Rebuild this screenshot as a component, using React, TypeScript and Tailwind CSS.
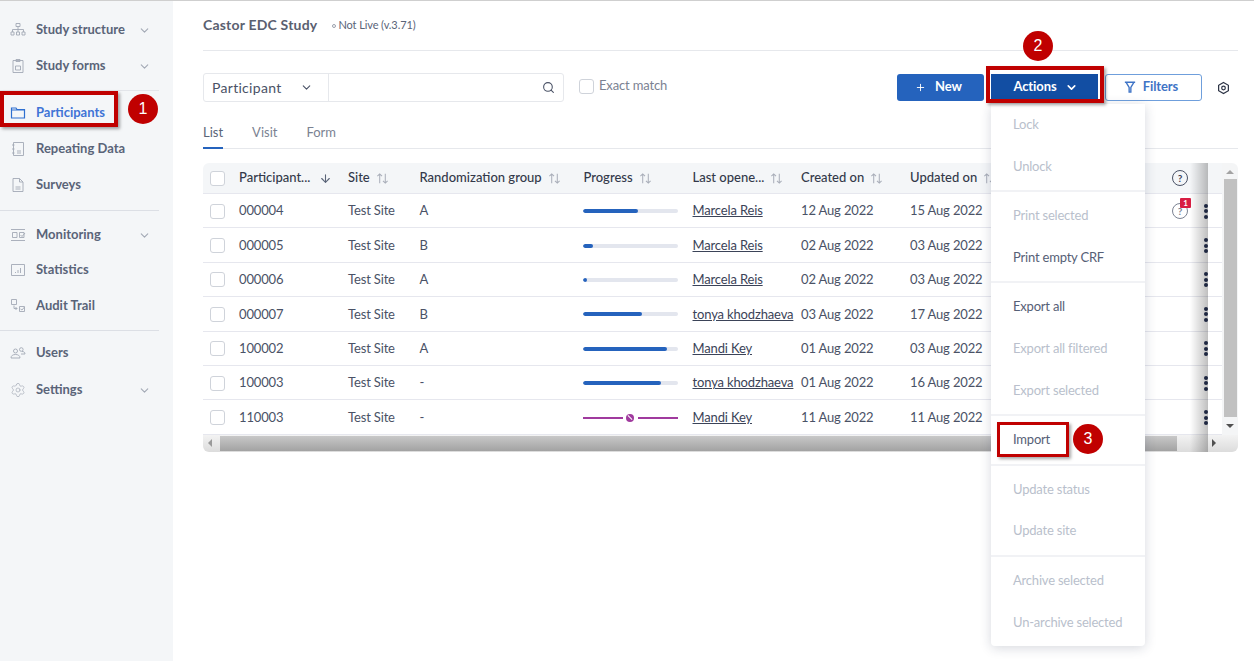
import { ChevronDown, Plus, Search, Settings, ArrowDown } from 'lucide-react';
import type { ReactNode } from 'react';

const PARTICIPANTS = [
  { id: '000004', group: 'A', progress: 58, user: 'Marcela Reis', created: '12 Aug 2022', updated: '15 Aug 2022', query: true },
  { id: '000005', group: 'B', progress: 11, user: 'Marcela Reis', created: '02 Aug 2022', updated: '03 Aug 2022' },
  { id: '000006', group: 'A', progress: 5, user: 'Marcela Reis', created: '02 Aug 2022', updated: '03 Aug 2022' },
  { id: '000007', group: 'B', progress: 63, user: 'tonya khodzhaeva', created: '03 Aug 2022', updated: '17 Aug 2022' },
  { id: '100002', group: 'A', progress: 89, user: 'Mandi Key', created: '01 Aug 2022', updated: '03 Aug 2022' },
  { id: '100003', group: '-', progress: 83, user: 'tonya khodzhaeva', created: '01 Aug 2022', updated: '16 Aug 2022' },
  { id: '110003', group: '-', progress: -1, user: 'Mandi Key', created: '11 Aug 2022', updated: '11 Aug 2022' },
];

const MENU = [
  [{ label: 'Lock' }, { label: 'Unlock' }],
  [{ label: 'Print selected' }, { label: 'Print empty CRF', active: true }],
  [{ label: 'Export all', active: true }, { label: 'Export all filtered' }, { label: 'Export selected' }],
  [{ label: 'Import', active: true }],
  [{ label: 'Update status' }, { label: 'Update site' }],
  [{ label: 'Archive selected' }, { label: 'Un-archive selected' }],
];

const ROW_GRID = 'grid grid-cols-[36px_109px_71.5px_164px_109px_108.5px_109px_1fr_40px]';

function NavIcon({ children }: { children: ReactNode }) {
  return (
    <svg viewBox="0 0 16 16" className="w-4 h-4 shrink-0" fill="none" stroke="currentColor" strokeWidth="0.9">
      {children}
    </svg>
  );
}

const ICONS: Record<string, ReactNode> = {
  structure: <path d="M6 1.500h4v3H6zM8 4.500v3M2.500 10V7.500h11V10M8 7.500V10M1 10h3v3H1zM6.500 10h3v3h-3zM12 10h3v3h-3z" />,
  forms: <path d="M3 2.500h10v12H3zM6 1.500h4v2H6zM5.500 8h5v4h-5z" />,
  folder: <path d="M1.500 3h4.500l1 1.500h7.500v8.500h-13z M1.500 5h13" strokeWidth="1.2" />,
  repeating: <path d="M3.500 1.500h10v13h-10zM2 4h2.500M2 8h2.500M2 12h2.500M7 10h4M7 12h4" />,
  surveys: <path d="M3 1.500h6.500l3.500 3.500v9.500h-10zM9.500 1.500v3.500h3.500M5.500 10h5M5.500 12h5" />,
  monitoring: <path d="M1 2.500h14M1 13.500h14M2.500 5.500h4.500v5h-4.500zM9.500 5.500h4.500v5h-4.500zM10.500 8l1.500 1.500 3-3.500" />,
  statistics: <path d="M1.500 2.500h13v11h-13zM5.500 11v-1M8 11V8M10.500 11V6" />,
  audit: <path d="M1.500 1.500h5v5h-5zM4 7.500v3h3M5.500 9l1.500 1.500-1.500 1.500M9.500 8.500h5v5h-5zM10.500 11l1.500 1 2.500-3" />,
  users: <path d="M1 13c0-2.500 2-3.500 4.500-3.500s4.500 1 4.500 3.500zM3.500 6a2 2 0 1 0 4 0 2 2 0 1 0-4 0zM9.500 4.500a1.800 1.800 0 1 0 3.600 0 1.800 1.800 0 1 0-3.600 0zM11 9h4c0-1.800-1.200-2.500-3-2.500" />,
};

function NavItem({ icon, label, chevron, active, className }: { icon: ReactNode; label: string; chevron?: boolean; active?: boolean; className?: string }) {
  return (
    <div className={`flex items-center pl-[10px] pr-[22px] h-9 ${className ?? ''}`}>
      <span className={active ? 'text-[#2e6fd0]' : 'text-[#a3a9b5]'}>{icon}</span>
      <span className={`ml-[10px] flex-1 text-[13px] font-bold ${active ? 'text-[#3f74d6]' : 'text-[#5a6478]'}`}>{label}</span>
      {chevron && <ChevronDown className="w-[13px] h-[13px] text-[#a3a9b5]" strokeWidth={2} />}
    </div>
  );
}

function Sidebar() {
  return (
    <aside className="w-[173px] shrink-0 bg-[#f4f6f8] pt-[11px]">
      <NavItem icon={<NavIcon>{ICONS.structure}</NavIcon>} label="Study structure" chevron />
      <NavItem icon={<NavIcon>{ICONS.forms}</NavIcon>} label="Study forms" chevron />
      <div className="mt-[6px] mb-[4px] mr-[14px] border-t border-[#e3e5ea]" />
      <NavItem icon={<NavIcon>{ICONS.folder}</NavIcon>} label="Participants" active />
      <NavItem icon={<NavIcon>{ICONS.repeating}</NavIcon>} label="Repeating Data" />
      <NavItem icon={<NavIcon>{ICONS.surveys}</NavIcon>} label="Surveys" />
      <div className="mt-[7px] mb-[6px] mr-[14px] border-t border-[#dcdfe5]" />
      <NavItem icon={<NavIcon>{ICONS.monitoring}</NavIcon>} label="Monitoring" chevron />
      <NavItem icon={<NavIcon>{ICONS.statistics}</NavIcon>} label="Statistics" className="-mt-[1px]" />
      <NavItem icon={<NavIcon>{ICONS.audit}</NavIcon>} label="Audit Trail" />
      <div className="mt-[6px] mb-[4px] mr-[14px] border-t border-[#dcdfe5]" />
      <NavItem icon={<NavIcon>{ICONS.users}</NavIcon>} label="Users" />
      <NavItem icon={<Settings className="w-4 h-4" strokeWidth={1} />} label="Settings" chevron className="mt-[1px]" />
    </aside>
  );
}

function Checkbox({ className }: { className?: string }) {
  return <span className={`block w-[15px] h-[15px] rounded-[3px] border border-[#cfd3da] bg-white ${className ?? ''}`} />;
}

function SortIcon() {
  return (
    <svg viewBox="0 0 14 14" className="w-[13px] h-[13px] ml-[6px] shrink-0 text-[#a9aeb9]" fill="none" stroke="currentColor" strokeWidth="1.1">
      <path d="M4 12V2M1.500 4.500 4 2l2.500 2.500M10 2v10M7.500 9.500 10 12l2.500-2.500" />
    </svg>
  );
}

function HeadCell({ label }: { label: string }) {
  return (
    <div className="flex items-center text-[13px] font-medium text-[#33394a]">
      <span className="whitespace-nowrap">{label}</span>
      <SortIcon />
    </div>
  );
}

function QueryIcon({ color }: { color: string }) {
  return (
    <span className={`flex items-center justify-center w-[16px] h-[16px] rounded-full border-[1.5px] text-[10px] font-bold leading-none ${color}`}>?</span>
  );
}

function Progress({ value }: { value: number }) {
  if (value < 0) {
    return (
      <div className="flex items-center w-[95px] -ml-[1px]">
        <span className="h-[2px] w-[40px] bg-[#a03a9e]" />
        <span className="flex items-center justify-center w-[8px] h-[8px] mx-[3.5px] rounded-full bg-[#a03a9e]">
          <span className="block w-[6px] h-[1px] bg-white rotate-45" />
        </span>
        <span className="h-[2px] flex-1 bg-[#a03a9e]" />
      </div>
    );
  }
  return (
    <div className="w-[95px] h-[4px] -ml-[1px] rounded-full bg-[#e3e6ee] overflow-hidden">
      <div className="h-full rounded-full bg-[#2563bd]" style={{ width: `${value}%` }} />
    </div>
  );
}

function Kebab() {
  return (
    <span className="flex flex-col gap-[1.5px] mt-[1px]">
      <i className="block w-[4px] h-[4px] rounded-full bg-[#1d2640]" />
      <i className="block w-[4px] h-[4px] rounded-full bg-[#1d2640]" />
      <i className="block w-[4px] h-[4px] rounded-full bg-[#1d2640]" />
    </span>
  );
}

function ParticipantsTable() {
  return (
    <div className="relative mt-[14px] rounded-[6px] overflow-hidden">
      <div className="flex">
        <div className="flex-1 min-w-0">
          <div className={`${ROW_GRID} h-[31px] items-center bg-[#f4f6f8] border-b border-[#e6e7ee]`}>
            <div className="pl-[7px]"><Checkbox /></div>
            <div className="flex items-center text-[13px] font-medium text-[#33394a]">
              <span>Participant...</span>
              <ArrowDown className="w-[13px] h-[13px] ml-[9px] text-[#5a6478]" />
            </div>
            <HeadCell label="Site" />
            <HeadCell label="Randomization group" />
            <HeadCell label="Progress" />
            <HeadCell label="Last opene..." />
            <HeadCell label="Created on" />
            <HeadCell label="Updated on" />
            <div />
          </div>
          {PARTICIPANTS.map((p) => (
            <div key={p.id} className={`${ROW_GRID} h-[34.4px] pt-[1px] items-center border-b border-[#e6e7ee] text-[13px] tracking-[-0.15px] text-[#4a5266]`}>
              <div className="pl-[7px]"><Checkbox /></div>
              <div>{p.id}</div>
              <div>Test Site</div>
              <div>{p.group}</div>
              <div><Progress value={p.progress} /></div>
              <div className="underline whitespace-nowrap text-[#3b4358]">{p.user}</div>
              <div>{p.created}</div>
              <div>{p.updated}</div>
              <div />
            </div>
          ))}
        </div>
        {/* Pinned action column */}
        <div className="w-[59px] shrink-0 bg-white">
          <div className="h-[31px] flex items-center pl-[9px] bg-[#f4f6f8] border-b border-[#e6e7ee]">
            <QueryIcon color="border-[#4a5266] text-[#3b4358]" />
          </div>
          {PARTICIPANTS.map((p) => (
            <div key={p.id} className="relative h-[34.4px] flex items-center pl-[9px] border-b border-[#e6e7ee]">
              {p.query && (
                <span className="relative">
                  <QueryIcon color="border-[#7b8292] text-[#7b8292]" />
                  <span className="absolute -top-[5px] left-[8px] w-[11px] h-[10px] rounded-[1px] bg-[#d81e43] text-white text-[8px] font-bold leading-[10px] text-center">1</span>
                </span>
              )}
              <span className="absolute z-[1] left-[41px]"><Kebab /></span>
            </div>
          ))}
        </div>
        {/* Vertical scrollbar */}
        <div className="w-[16px] shrink-0 flex flex-col items-center bg-[#f4f5f6]">
          <span className="mt-[7px] mb-[5px] w-0 h-0 border-x-[4px] border-x-transparent border-b-[4px] border-b-[#a3a3a3]" />
          <div className="w-[13px] flex-1 bg-[#c1c1c1]" />
          <span className="mt-[7px] mb-[7px] w-0 h-0 border-x-[4px] border-x-transparent border-t-[4px] border-t-[#505050]" />
        </div>
      </div>
      {/* Horizontal scrollbar */}
      <div className="h-[17px] flex items-center bg-gradient-to-b from-[#f3f3f3] to-[#dcdcdc]">
        <span className="ml-[5px] w-0 h-0 border-y-[4px] border-y-transparent border-r-[4px] border-r-[#9a9a9a]" />
        <div className="ml-[8px] h-[15px] w-[957px] bg-gradient-to-b from-[#c8c8c8] to-[#a2a2a2]" />
        <span className="ml-auto mr-[22px] w-0 h-0 border-y-[4px] border-y-transparent border-l-[4px] border-l-[#505050]" />
      </div>
      {/* Shadow on the edge of the pinned column */}
      <div className="absolute z-0 left-[987px] top-0 bottom-0 w-[18px] bg-gradient-to-r from-transparent to-black/25" />
    </div>
  );
}

function ActionsMenu() {
  return (
    <div className="absolute left-[991px] top-[103px] z-10 w-[154px] rounded-b-[4px] bg-white shadow-[0_2px_12px_rgba(30,40,70,0.18)] divide-y-2 divide-[#f1f2f5]">
      {MENU.map((group, i) => (
        <div key={i} className={i === 0 ? 'pb-[3px]' : 'py-[3px]'}>
          {group.map((item) => (
            <div key={item.label} className={`flex items-center h-[41.6px] pl-[22px] text-[13px] tracking-[-0.2px] ${item.active ? 'text-[#566076]' : 'text-[#b9bfcc]'}`}>
              {item.label}
            </div>
          ))}
        </div>
      ))}
    </div>
  );
}

function Badge({ n, className }: { n: number; className: string }) {
  return (
    <span className={`absolute z-20 flex items-center justify-center w-[30px] h-[30px] rounded-full bg-[#c00000] text-white text-[16px] font-['Liberation_Sans',sans-serif] ${className}`}>
      {n}
    </span>
  );
}

export default function App() {
  return (
    <div className="relative w-[1254px] h-[661px] overflow-hidden bg-white font-['Lato',sans-serif] border-t border-[#cfcfcf]">
      <div className="flex h-full">
        <Sidebar />
        <main className="flex-1 min-w-0 pl-[30px] pr-[16px]">
          <div className="flex items-center h-[50px] pb-[2px] border-b border-[#e6e8ec]">
            <h1 className="text-[14px] font-bold text-[#5a6070] tracking-[0.2px]">Castor EDC Study</h1>
            <span className="ml-[15px] mt-[2px] flex items-center text-[11px] tracking-[-0.1px] text-[#5a6478]">
              <i className="block w-[4px] h-[4px] mr-[2px] rounded-full border border-[#9aa0ad]" />
              Not Live (v.3.71)
            </span>
          </div>

          <div className="flex items-center mt-[22px]">
            <div className="flex h-[29px] w-[361px] rounded-[3px] border border-[#e6e8ec]">
              <div className="flex items-center w-[125px] pl-[8px] pr-[15px] border-r border-[#e6e8ec] text-[14px] text-[#4a5266] tracking-[0.3px]">
                <span className="flex-1">Participant</span>
                <ChevronDown className="w-[13px] h-[13px]" />
              </div>
              <div className="flex flex-1 items-center justify-end pr-[8px]">
                <Search className="w-[13px] h-[13px] text-[#4a5266]" />
              </div>
            </div>
            <Checkbox className="ml-[15px] -mt-[3px]" />
            <span className="ml-[5px] -mt-[3px] text-[13px] tracking-[-0.15px] text-[#7b8292]">Exact match</span>
            <div className="ml-auto flex items-center">
              <button className="flex items-center justify-center w-[87px] h-[27px] pb-[1px] rounded-[3px] bg-[#2563bd] text-white text-[13px] font-bold tracking-[-0.1px]">
                <Plus className="w-[11px] h-[11px] mr-[9px] -ml-[4px]" />New
              </button>
              <button className="flex items-center justify-center ml-[7px] w-[107px] h-[27px] pb-[1px] bg-[#124ea3] text-white text-[13px] font-bold tracking-[-0.1px]">
                <span className="ml-[2px]">Actions</span><ChevronDown className="w-[13px] h-[13px] ml-[8px]" strokeWidth={3} />
              </button>
              <button className="flex items-center justify-center ml-[7px] w-[97px] h-[27px] pb-[1px] pr-[5px] rounded-[3px] border border-[#6f9fdc] text-[#3f74c6] text-[13px] font-bold tracking-[-0.1px]">
                <svg viewBox="0 0 14 14" className="w-[12px] h-[12px] mr-[7px]" fill="none" stroke="currentColor" strokeWidth="1.6">
                  <path d="M1 1.500h12M2.500 1.500 6 7.500v5.500h2V7.500l3.500-6" />
                </svg>
                Filters
              </button>
              <svg viewBox="0 0 16 16" className="ml-[15px] mr-[8px] w-[13px] h-[14px] text-[#2c3345]" fill="none" stroke="currentColor" strokeWidth="1.5">
                <path d="M8 1.300 14 4.700v6.600L8 14.700 2 11.300V4.700z" />
                <circle cx="8" cy="8" r="2.200" />
              </svg>
            </div>
          </div>

          <div className="flex mt-[16px] h-[31px] border-b border-[#e6e8ec] text-[13px] text-[#7b8292]">
            <div className="h-[31px] border-b-2 border-[#2563bd] pt-[5px] text-[#5a6478]">List</div>
            <div className="ml-[29px] pt-[5px]">Visit</div>
            <div className="ml-[29px] pt-[5px]">Form</div>
          </div>

          <ParticipantsTable />
        </main>
      </div>

      <ActionsMenu />

      {/* Tutorial annotations */}
      <div className="absolute z-20 left-0 top-[90px] w-[118px] h-[36px] border-[4px] border-[#c00000] shadow-[2px_2px_3px_rgba(0,0,0,0.35)]" />
      <Badge n={1} className="left-[128px] top-[93px]" />
      <div className="absolute z-20 left-[986px] top-[65px] w-[118px] h-[37px] border-[4px] border-[#c00000] shadow-[2px_2px_3px_rgba(0,0,0,0.35)]" />
      <Badge n={2} className="left-[1023px] top-[30px]" />
      <div className="absolute z-20 left-[997px] top-[421px] w-[72px] h-[35px] border-[3px] border-[#c00000] shadow-[2px_2px_3px_rgba(0,0,0,0.35)]" />
      <Badge n={3} className="left-[1073px] top-[423px]" />
    </div>
  );
}
